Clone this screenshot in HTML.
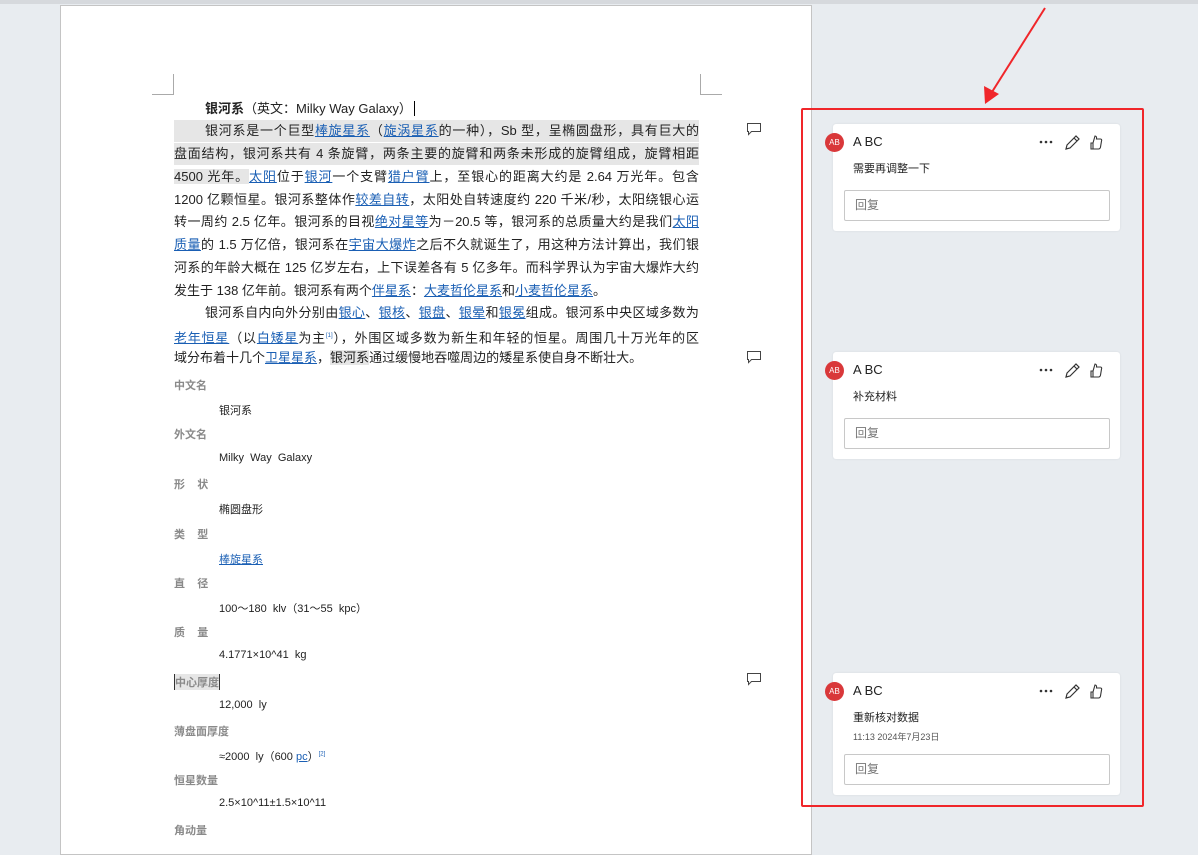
<!DOCTYPE html>
<html><head><meta charset="utf-8"><style>
*{margin:0;padding:0;box-sizing:border-box}
body{width:1198px;height:844px;overflow:hidden;background:#e8ecf0;position:relative;font-family:"Liberation Sans","Noto Sans CJK SC",sans-serif;}
.topbar{position:absolute;left:0;top:0;width:1198px;height:4px;background:#d6d9dd}
.page{position:absolute;left:60px;top:5px;width:752px;height:850px;background:#fff;border:1px solid #c4c4c4}
.ln{position:absolute;left:174px;width:525px;font-size:13px;color:#222;white-space:nowrap;text-align:justify;text-align-last:justify;height:22px;line-height:22px}
.ln.nj{text-align-last:left}
a,.a{color:#1a5fb4;text-decoration:underline}
.hl{background:#e6e6e6}
.lab{position:absolute;left:174px;font-size:11px;font-weight:bold;color:#8a8a8a}
.val{position:absolute;left:219px;font-size:11px;color:#222}
.card{position:absolute;left:833px;width:287px;background:#fff;border-radius:3px;box-shadow:0 0 2px rgba(0,0,0,.08)}
.av{position:absolute;left:-8px;top:9px;width:19px;height:19px;border-radius:50%;background:#d9383a;color:#fff;font-size:8px;line-height:19px;text-align:center}
.nm{position:absolute;left:20px;top:10px;font-size:13px;color:#222}
.tx{position:absolute;left:20px;font-size:11px;color:#222}
.rp{position:absolute;left:11px;width:266px;height:31px;border:1px solid #c8c8c8;border-radius:2px;font-size:12px;color:#777;padding-left:10px;line-height:29px}
.ic{position:absolute;top:8px;left:205px}
.cmt{position:absolute;left:746px}
</style></head><body>
<div class="topbar"></div>
<div class="page"></div>
<div style="position:absolute;left:152px;top:94px;width:22px;height:1px;background:#aaa"></div>
<div style="position:absolute;left:173px;top:74px;width:1px;height:21px;background:#aaa"></div>
<div style="position:absolute;left:700px;top:74px;width:1px;height:21px;background:#aaa"></div>
<div style="position:absolute;left:700px;top:94px;width:22px;height:1px;background:#aaa"></div>

<div class="ln nj" style="top:98px;padding-left:31px"><b>银河系</b>（英文：Milky Way Galaxy）<span style="border-left:1px solid #000;margin-left:2px"></span></div>
<div class="ln hl" style="top:120px;padding-left:31px">银河系是一个巨型<a>棒旋星系</a>（<a>旋涡星系</a>的一种），Sb 型，呈椭圆盘形，具有巨大的</div>
<div class="ln hl" style="top:143px">盘面结构，银河系共有 4 条旋臂，两条主要的旋臂和两条未形成的旋臂组成，旋臂相距</div>
<div class="ln" style="top:166px"><span class="hl">4500 光年。</span><a>太阳</a>位于<a>银河</a>一个支臂<a>猎户臂</a>上，至银心的距离大约是 2.64 万光年。包含</div>
<div class="ln" style="top:189px">1200 亿颗恒星。银河系整体作<a>较差自转</a>，太阳处自转速度约 220 千米/秒，太阳绕银心运</div>
<div class="ln" style="top:211px">转一周约 2.5 亿年。银河系的目视<a>绝对星等</a>为－20.5 等，银河系的总质量大约是我们<a>太阳</a></div>
<div class="ln" style="top:234px"><a>质量</a>的 1.5 万亿倍，银河系在<a>宇宙大爆炸</a>之后不久就诞生了，用这种方法计算出，我们银</div>
<div class="ln" style="top:257px">河系的年龄大概在 125 亿岁左右，上下误差各有 5 亿多年。而科学界认为宇宙大爆炸大约</div>
<div class="ln nj" style="top:280px">发生于 138 亿年前。银河系有两个<a>伴星系</a>：<a>大麦哲伦星系</a>和<a>小麦哲伦星系</a>。</div>
<div class="ln" style="top:302px;padding-left:31px">银河系自内向外分别由<a>银心</a>、<a>银核</a>、<a>银盘</a>、<a>银晕</a>和<a>银冕</a>组成。银河系中央区域多数为</div>
<div class="ln" style="top:325px"><a>老年恒星</a>（以<a>白矮星</a>为主<sup style="font-size:6px;color:#1a5fb4">[1]</sup>），外围区域多数为新生和年轻的恒星。周围几十万光年的区</div>
<div class="ln nj" style="top:347px">域分布着十几个<a>卫星星系</a>，<span class="hl">银河系</span>通过缓慢地吞噬周边的矮星系使自身不断壮大。</div>

<div class="lab" style="top:377px">中文名</div><div class="val" style="top:402px">银河系</div>
<div class="lab" style="top:426px">外文名</div><div class="val" style="top:452px">Milky&nbsp; Way&nbsp; Galaxy</div>
<div class="lab" style="top:476px">形&nbsp;&nbsp;&nbsp; 状</div><div class="val" style="top:501px">椭圆盘形</div>
<div class="lab" style="top:526px">类&nbsp;&nbsp;&nbsp; 型</div><div class="val" style="top:551px"><a>棒旋星系</a></div>
<div class="lab" style="top:575px">直&nbsp;&nbsp;&nbsp; 径</div><div class="val" style="top:600px">100～180&nbsp; klv（31～55&nbsp; kpc）</div>
<div class="lab" style="top:624px">质&nbsp;&nbsp;&nbsp; 量</div><div class="val" style="top:649px">4.1771×10^41&nbsp; kg</div>
<div class="lab" style="top:674px;background:#e6e6e6;border-left:1px solid #333;border-right:1px solid #333">中心厚度</div><div class="val" style="top:699px">12,000&nbsp; ly</div>
<div class="lab" style="top:723px">薄盘面厚度</div><div class="val" style="top:748px">≈2000&nbsp; ly（600 <a>pc</a>）<sup style="font-size:6px;color:#1a5fb4">[2]</sup></div>
<div class="lab" style="top:772px">恒星数量</div><div class="val" style="top:797px">2.5×10^11±1.5×10^11</div>
<div class="lab" style="top:822px">角动量</div>

<svg class="cmt" style="top:122px" width="16" height="14"><path d="M1.5 1.5h13v8h-9l-3 3v-3h-1z" fill="none" stroke="#444"/></svg>
<svg class="cmt" style="top:350px" width="16" height="14"><path d="M1.5 1.5h13v8h-9l-3 3v-3h-1z" fill="none" stroke="#444"/></svg>
<svg class="cmt" style="top:672px" width="16" height="14"><path d="M1.5 1.5h13v8h-9l-3 3v-3h-1z" fill="none" stroke="#444"/></svg>

<div class="card" style="top:124px;height:107px">
<div class="av">AB</div><div class="nm">A BC</div>
<svg class="ic" width="70" height="20"><g fill="#333"><circle cx="3" cy="10" r="1.3"/><circle cx="8" cy="10" r="1.3"/><circle cx="13" cy="10" r="1.3"/></g><path d="M28 17l1-4 9-9 3 3-9 9z M36 6l3 3" fill="none" stroke="#333" stroke-width="1.2"/><path d="M55 17v-6h-2v6zM55 11l2-7c1 0 2 1 1.5 3h4c1 0 1.5 1 1 2l-1 6c0 1-1 2-2 2h-5.5" fill="none" stroke="#333" stroke-width="1.1"/></svg>
<div class="tx" style="top:36px">需要再调整一下</div>
<div class="rp" style="top:66px">回复</div>
</div>
<div class="card" style="top:352px;height:107px">
<div class="av">AB</div><div class="nm">A BC</div>
<svg class="ic" width="70" height="20"><g fill="#333"><circle cx="3" cy="10" r="1.3"/><circle cx="8" cy="10" r="1.3"/><circle cx="13" cy="10" r="1.3"/></g><path d="M28 17l1-4 9-9 3 3-9 9z M36 6l3 3" fill="none" stroke="#333" stroke-width="1.2"/><path d="M55 17v-6h-2v6zM55 11l2-7c1 0 2 1 1.5 3h4c1 0 1.5 1 1 2l-1 6c0 1-1 2-2 2h-5.5" fill="none" stroke="#333" stroke-width="1.1"/></svg>
<div class="tx" style="top:36px">补充材料</div>
<div class="rp" style="top:66px">回复</div>
</div>
<div class="card" style="top:673px;height:122px">
<div class="av">AB</div><div class="nm">A BC</div>
<svg class="ic" width="70" height="20"><g fill="#333"><circle cx="3" cy="10" r="1.3"/><circle cx="8" cy="10" r="1.3"/><circle cx="13" cy="10" r="1.3"/></g><path d="M28 17l1-4 9-9 3 3-9 9z M36 6l3 3" fill="none" stroke="#333" stroke-width="1.2"/><path d="M55 17v-6h-2v6zM55 11l2-7c1 0 2 1 1.5 3h4c1 0 1.5 1 1 2l-1 6c0 1-1 2-2 2h-5.5" fill="none" stroke="#333" stroke-width="1.1"/></svg>
<div class="tx" style="top:36px">重新核对数据</div>
<div class="tx" style="top:57px;font-size:9px;color:#555">11:13 2024年7月23日</div>
<div class="rp" style="top:81px">回复</div>
</div>

<div style="position:absolute;left:801px;top:108px;width:343px;height:699px;border:2px solid #f0262a;border-radius:2px"></div>
<svg style="position:absolute;left:0;top:0" width="1198" height="844"><path d="M1045 8L992 92" stroke="#f0262a" stroke-width="2"/><path d="M985 104L984 86L999 94z" fill="#f0262a"/></svg>
</body></html>
